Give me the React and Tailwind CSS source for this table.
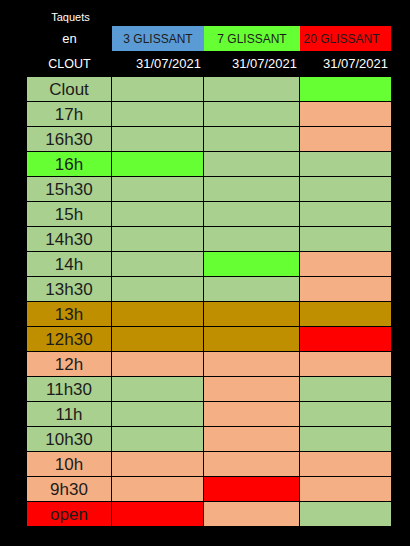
import React from "react";

const G = "bg-[#a9d08e]";
const S = "bg-[#f4b084]";
const B = "bg-[#66ff33]";
const R = "bg-[#ff0000]";
const O = "bg-[#bf8f00]";

const rows = [
  ["Clout", G, G, G, B],
  ["17h", G, G, G, S],
  ["16h30", G, G, G, S],
  ["16h", B, B, G, G],
  ["15h30", G, G, G, G],
  ["15h", G, G, G, G],
  ["14h30", G, G, G, G],
  ["14h", G, G, B, S],
  ["13h30", G, G, G, S],
  ["13h", O, O, O, O],
  ["12h30", O, O, O, R],
  ["12h", S, S, S, S],
  ["11h30", G, G, S, G],
  ["11h", G, G, S, G],
  ["10h30", G, G, S, G],
  ["10h", S, S, S, S],
  ["9h30", S, S, R, S],
  ["open", R, R, S, G],
];

const App = () => {
  return (
    <div
      style={{ fontFamily: "'Liberation Sans', Arial, sans-serif" }}
      className="w-[410px] h-[546px] bg-black pl-[27px] overflow-hidden"
    >
      {/* Header */}
      <div className="grid grid-cols-[85px_92px_96px_91px] text-white">
        <div className="h-[26px] flex items-center justify-center pt-[9px] pl-[2px] text-[11px]">
          Taquets
        </div>
        <div className="col-span-3" />

        <div className="h-[25px] flex items-center justify-center text-[13px]">en</div>
        <div className="h-[25px] flex items-center justify-center bg-[#5b9bd5] text-[#1c1c1c] text-[12px]">
          3 GLISSANT
        </div>
        <div className="h-[25px] flex items-center justify-center bg-[#66ff33] text-[#1c1c1c] text-[12px]">
          7 GLISSANT
        </div>
        <div className="h-[25px] flex items-center justify-center pr-[8px] bg-[#ff0000] text-[#1c1c1c] text-[12px]">
          20 GLISSANT
        </div>

        <div className="h-[26px] flex items-center justify-center text-[12.5px]">CLOUT</div>
        {["31/07/2021", "31/07/2021", "31/07/2021"].map((d, i) => (
          <div key={i} className="h-[26px] flex items-center justify-end pr-[3px] text-[13px]">
            {d}
          </div>
        ))}
      </div>

      {/* Grid */}
      <div className="grid grid-cols-[84px_91px_95px_91px] gap-px w-[364px]">
        {rows.map(([label, ...cells]) => (
          <React.Fragment key={label}>
            <div
              className={`${cells[0]} h-[24px] flex items-center justify-center pt-[1px] text-[17px] text-[#1c1c1c]`}
            >
              {label}
            </div>
            {cells.slice(1).map((c, i) => (
              <div key={i} className={`${c} h-[24px]`} />
            ))}
          </React.Fragment>
        ))}
      </div>
    </div>
  );
};

export default App;
